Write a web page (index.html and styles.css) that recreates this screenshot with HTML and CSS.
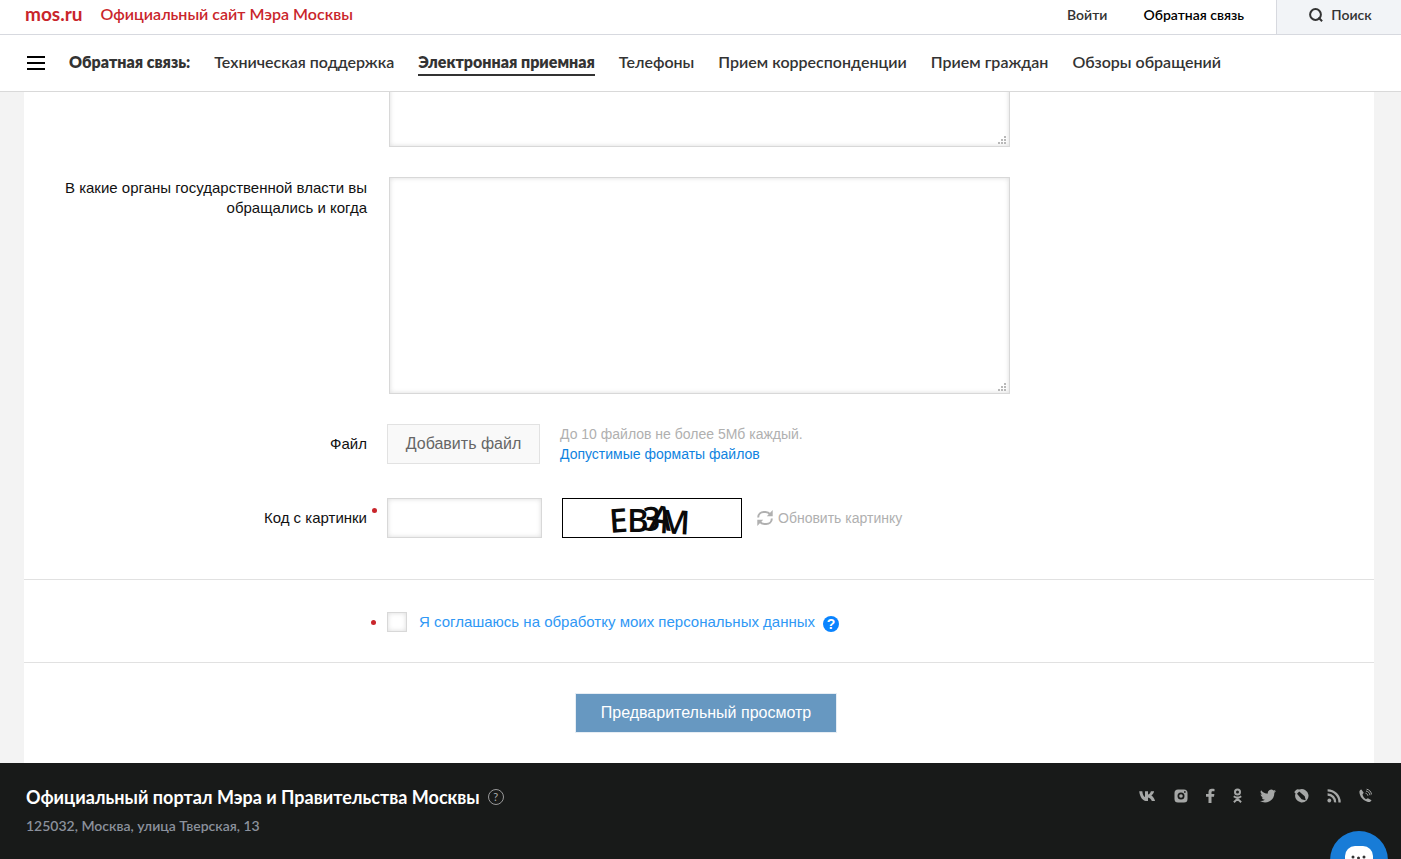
FILE: index.html
```html
<!DOCTYPE html>
<html lang="ru">
<head>
<meta charset="utf-8">
<title>Электронная приемная</title>
<link rel="stylesheet" href="styles.css">
</head>
<body>
<header class="header">
  <div class="topbar">
    <a class="brand" href="#">mos.ru</a>
    <a class="slogan" href="#">Официальный сайт Мэра Москвы</a>
    <a class="login" href="#">Войти</a>
    <a class="feedback" href="#">Обратная связь</a>
    <button class="search" type="button">
      <svg width="14" height="14" viewBox="0 0 14 14" fill="none" stroke="#333" stroke-width="2"><circle cx="6.500" cy="6.500" r="5.400"/><path d="M9.500 9.500l3.600 3.800"/></svg>
      Поиск
    </button>
  </div>
  <nav class="nav">
    <button class="burger" type="button" aria-label="Меню"><span></span><span></span><span></span></button>
    <strong class="nav-title">Обратная связь:</strong>
    <a href="#">Техническая поддержка</a>
    <a class="active" href="#">Электронная приемная</a>
    <a href="#">Телефоны</a>
    <a href="#">Прием корреспонденции</a>
    <a href="#">Прием граждан</a>
    <a href="#">Обзоры обращений</a>
  </nav>
</header>
<main class="main">
  <form class="form">
    <div class="fields">
      <div class="row row-first">
        <span class="label"></span>
        <div class="area-box"><textarea class="area" aria-label="Текст обращения"></textarea><svg class="grip" width="8" height="8" viewBox="0 0 8 8" fill="#b8b8b8"><path d="M6 0h2v2H6zM3 3h2v2H3zM6 3h2v2H6zM0 6h2v2H0zM3 6h2v2H3zM6 6h2v2H6z"/></svg></div>
      </div>
      <div class="row">
        <label class="label label-top" for="organs">В какие органы государственной власти вы обращались и когда</label>
        <div class="area-box"><textarea class="area" id="organs"></textarea><svg class="grip" width="8" height="8" viewBox="0 0 8 8" fill="#b8b8b8"><path d="M6 0h2v2H6zM3 3h2v2H3zM6 3h2v2H6zM0 6h2v2H0zM3 6h2v2H3zM6 6h2v2H6z"/></svg></div>
      </div>
      <div class="row row-mid">
        <label class="label" for="file">Файл</label>
        <button class="file" id="file" type="button">Добавить файл</button>
        <div class="hint">До 10 файлов не более 5Мб каждый.<br><a href="#">Допустимые форматы файлов</a></div>
      </div>
      <div class="row row-mid">
        <label class="label required" for="code">Код с картинки</label>
        <input class="code" id="code" type="text">
        <svg class="captcha" width="178" height="38" viewBox="0 0 178 38"><text x="47 64 78 86 96" y="34 33 31 29 34" rotate="-4 0 4 8 3">EB3AM</text></svg>
        <button class="refresh" type="button">
          <svg width="16" height="16" viewBox="0 0 16 16"><g fill="none" stroke="#b0b0b0" stroke-width="2"><path d="M1.200 7.500C1.200 4 3.800 2 6.800 2h1.700c2 0 3.500.8 4.500 2.200"/><path d="M14.800 8.500c0 3.500-2.600 5.500-5.600 5.500H7.500c-2 0-3.500-.8-4.500-2.200"/></g><path fill="#b0b0b0" d="M15.700 0v6.300H9.800zM.3 16V9.700h5.900z"/></svg>
          Обновить картинку
        </button>
      </div>
    </div>
    <div class="consent">
      <span class="dot"></span>
      <input class="check" id="agree" type="checkbox">
      <label for="agree"><a href="#">Я соглашаюсь на обработку моих персональных данных</a></label>
      <button class="help" type="button">?</button>
    </div>
    <div class="submit-row"><button class="submit" type="button">Предварительный просмотр</button></div>
  </form>
</main>
<footer class="footer">
  <div class="about">
    <div class="portal">Официальный портал Мэра и Правительства Москвы <button class="info" type="button">?</button></div>
    <div class="address">125032, Москва, улица Тверская, 13</div>
  </div>
  <div class="social">
    <a href="#" aria-label="ВКонтакте"><svg width="17" height="16" viewBox="0 0 17 16"><path d="M8.100 13C3.600 13 1 9.300.2 3.200h3.100c.3 3.300 1.500 5.300 2.700 5.800V3.200h3v3.400c1.300-.3 2.400-1.800 2.900-3.400h3.200c-.4 2-1.600 3.500-2.700 4.400 1.300.8 2.900 2.500 3.700 5.400h-3.300c-.6-1.900-1.900-3.300-3.800-3.600V13z"/></svg></a>
    <a href="#" aria-label="Instagram"><svg width="14" height="16" viewBox="0 0 14 16"><path fill-rule="evenodd" d="M4 1.500h6a3.500 3.500 0 0 1 3.500 3.500v6a3.500 3.500 0 0 1-3.500 3.500H4A3.500 3.500 0 0 1 .5 11V5A3.500 3.500 0 0 1 4 1.500zM7 4.500a3.500 3.500 0 1 0 0 7 3.500 3.500 0 0 0 0-7zm0 1.700a1.800 1.800 0 1 1 0 3.600 1.800 1.800 0 0 1 0-3.600zM10 3.200v1.600h1.600V3.200z"/></svg></a>
    <a href="#" aria-label="Facebook"><svg width="9" height="16" viewBox="0 0 9 16"><path d="M2.500 15V8.800H0V6.100h2.500V4C2.500 1.900 3.800.7 5.800.7c1 0 1.900.1 2.700.2v2.400H6.900c-1.100 0-1.400.5-1.400 1.300v1.500h2.900L8 8.800H5.500V15z"/></svg></a>
    <a href="#" aria-label="Одноклассники"><svg width="9" height="16" viewBox="0 0 9 16"><g fill="none" stroke="#a5a7a6" stroke-width="2"><circle cx="4.500" cy="4" r="2.500"/><path d="M.8 8.200c2.200 1.700 5.200 1.700 7.400 0M4.500 9.500v1M.9 14.200l3.600-3.400 3.600 3.400"/></g></svg></a>
    <a href="#" aria-label="Twitter"><svg width="16" height="16" viewBox="0 0 24 24"><path d="M24 4.600c-.9.400-1.800.7-2.800.8 1-.6 1.800-1.600 2.200-2.700-1 .6-2 1-3.100 1.200a4.900 4.900 0 0 0-8.400 4.500C7.700 8.200 4.100 6.300 1.700 3.200a4.900 4.900 0 0 0 1.500 6.600c-.8 0-1.600-.2-2.200-.6v.1c0 2.400 1.700 4.400 3.900 4.800-.7.200-1.500.2-2.200.1.600 2 2.400 3.400 4.600 3.400A9.900 9.900 0 0 1 0 19.500 14 14 0 0 0 7.500 21.700c9.100 0 14-7.500 14-14v-.6c1-.7 1.800-1.600 2.500-2.500z"/></svg></a>
    <a href="#" aria-label="LiveJournal"><svg width="15" height="16" viewBox="0 0 15 16"><path fill-rule="evenodd" d="M5.200 1.600A6.700 6.700 0 1 1 1.500 5.500L.3 4.200C1 2.700 2 1.700 3.400 1.200zM5.200 3.600 3 5.800l4.600 5.400 3.700 1.100.4-.4-1-3.700z"/></svg></a>
    <a href="#" aria-label="RSS"><svg width="14" height="16" viewBox="0 0 14 16"><circle cx="2.300" cy="12.500" r="1.900"/><path fill="none" stroke="#a5a7a6" stroke-width="2.300" d="M.6 6.500a7.500 7.500 0 0 1 7.500 7.900M.6 2.300a12 12 0 0 1 12 12.100"/></svg></a>
    <a href="#" aria-label="Телефон"><svg width="13" height="16" viewBox="0 0 13 16"><path d="M2.400 1.500 4.700 4.800 3.500 6.600c.6 2 1.700 3.600 3.400 4.600l2-1L12.500 12.300c-.6 1.500-2 2-3.500 1.600C4.300 12.800.7 8.700.4 4c-.1-1.200.8-2.200 2-2.500z"/><path fill="none" stroke="#a5a7a6" stroke-width="1" d="M6.500 5.200c1.300.3 2.200 1.200 2.400 2.500M7 3c2.200.4 3.700 2 4 4.200M7.600 1.200c2.600.4 4.600 2.500 4.900 5.200"/></svg></a>
  </div>
</footer>
<button class="chat" type="button" aria-label="Чат"><svg width="30" height="32" viewBox="0 0 30 32"><rect x="1" y="1" width="28" height="27" rx="10" fill="#fff"/><path fill="#fff" d="M8 26l2 6 7-5z"/><circle cx="9" cy="12" r="1.500" fill="#333"/><circle cx="14.500" cy="13" r="1.500" fill="#333"/><circle cx="20" cy="12" r="1.500" fill="#333"/></svg></button>
</body>
</html>
```
FILE: styles.css
```css
* { box-sizing: border-box; }
body {
  margin: 0;
  min-height: 100vh;
  display: flex;
  flex-direction: column;
  overflow: hidden;
  background: #f3f3f3;
  color: #111;
  font: 15px/20px "Liberation Sans", Arial, sans-serif;
}
a { color: inherit; text-decoration: none; }
button { margin: 0; padding: 0; border: 0; background: none; color: inherit; font: inherit; cursor: pointer; }
svg { display: block; }

.header { background: #fff; color: #333; font-family: Lato, sans-serif; }
.topbar { display: flex; align-items: center; height: 35px; padding-left: 25px; border-bottom: 1px solid #d7d9df; font-size: 14px; font-weight: 600; }
.brand, .slogan { color: #c9252b; font-size: 16px; padding-bottom: 6px; }
.brand { font-size: 19px; font-weight: 700; }
.slogan { margin-left: 18px; }
.login, .feedback { padding-bottom: 5px; }
.login { margin-left: auto; }
.feedback { margin: 0 32px 0 36px; color: #000; }
.search { display: flex; align-items: center; justify-content: center; gap: 8px; align-self: stretch; width: 125px; padding: 0 0 5px 3px; background: #f2f4f7; border-left: 1px solid #d7d9df; }
.nav { display: flex; align-items: center; gap: 24px; height: 57px; padding: 0 27px; border-bottom: 1px solid #d9d9d9; font-size: 16px; font-weight: 600; }
.nav a { padding: 2px 0; border-bottom: 2px solid transparent; }
.nav .active { border-color: #333; font-weight: 800; }
.nav-title { padding-bottom: 2px; font-weight: 800; }
.burger { display: grid; gap: 4px; width: 18px; }
.burger span { height: 2px; background: #000; }

.main { flex: 1; padding: 0 27px 0 24px; overflow: hidden; }
.form { height: 100%; background: #fff; }
.fields { display: grid; gap: 30px; padding-bottom: 41px; overflow: hidden; }
.row { display: flex; align-items: flex-start; }
.row-first { margin-top: -162px; }
.row-mid { align-items: center; }
.row-mid + .row-mid { margin-top: 4px; }
.label { width: 343px; margin-right: 20px; padding-left: 40px; text-align: right; }
.label-top { padding-top: 1px; }
.required { position: relative; }
.required::after { content: ""; position: absolute; top: 0; right: -10px; width: 5px; height: 5px; border-radius: 50%; background: #c9252b; }
.area-box { position: relative; width: 621px; margin-left: 2px; }
.area, .code, .check { border: 1px solid #d8d8d8; background: #fff; box-shadow: inset 0 0 5px rgba(0, 0, 0, .14); }
.area { display: block; width: 100%; height: 217px; resize: none; }
.grip { position: absolute; right: 4px; bottom: 3px; }
.file { width: 153px; height: 40px; border: 1px solid #e2e2e2; background: #f9f9f9; color: #666; font-size: 16px; }
.hint { margin-left: 20px; color: #b0b0b0; font-size: 14px; }
.hint a { color: #0f83e0; }
.code { width: 155px; height: 40px; }
.captcha { box-sizing: content-box; margin: 0 15px 0 20px; border: 1px solid #000; overflow: visible; }
.captcha text { font: 600 33px "Open Sans", sans-serif; fill: #0a0a0a; }
.refresh { display: flex; align-items: center; gap: 5px; color: #b0b0b0; font-size: 14px; }
.consent { display: flex; align-items: center; height: 84px; padding: 2px 0 0 347px; border: solid #e1e1e1; border-width: 1px 0; }
.dot { width: 5px; height: 5px; border-radius: 50%; background: #c9252b; }
.check { appearance: none; width: 20px; height: 20px; margin: 0 12px 0 11px; }
.consent a { color: #2f98f5; }
.help { width: 16px; height: 16px; margin: 4px 0 0 8px; border-radius: 50%; background: #0a84ff; color: #fff; font-size: 14px; font-weight: 700; line-height: 16px; }
.submit-row { display: flex; justify-content: center; padding: 30px 0 30px 14px; }
.submit { width: 262px; height: 40px; border: 1px solid #e6edf4; background: #6798c1; color: #fff; font-size: 16px; }

.footer { display: flex; justify-content: space-between; height: 96px; padding: 24px 29px 0 26px; background: #181a19; font-family: Lato, sans-serif; }
.portal { display: flex; align-items: center; gap: 8px; color: #fff; font-size: 18px; font-weight: 700; }
.info { width: 16px; height: 16px; border: 1px solid #999; border-radius: 50%; color: #aaa; font-size: 11px; font-weight: 400; line-height: 14px; }
.address { margin-top: 9px; color: #8b919c; font-size: 14px; font-weight: 600; }
.social { display: flex; gap: 18px; height: 18px; align-items: center; fill: #a5a7a6; }
.chat { position: fixed; right: 13px; bottom: -30px; display: flex; justify-content: center; width: 58px; height: 58px; padding-top: 14px; border-radius: 50%; background: #187cd7; }
```
